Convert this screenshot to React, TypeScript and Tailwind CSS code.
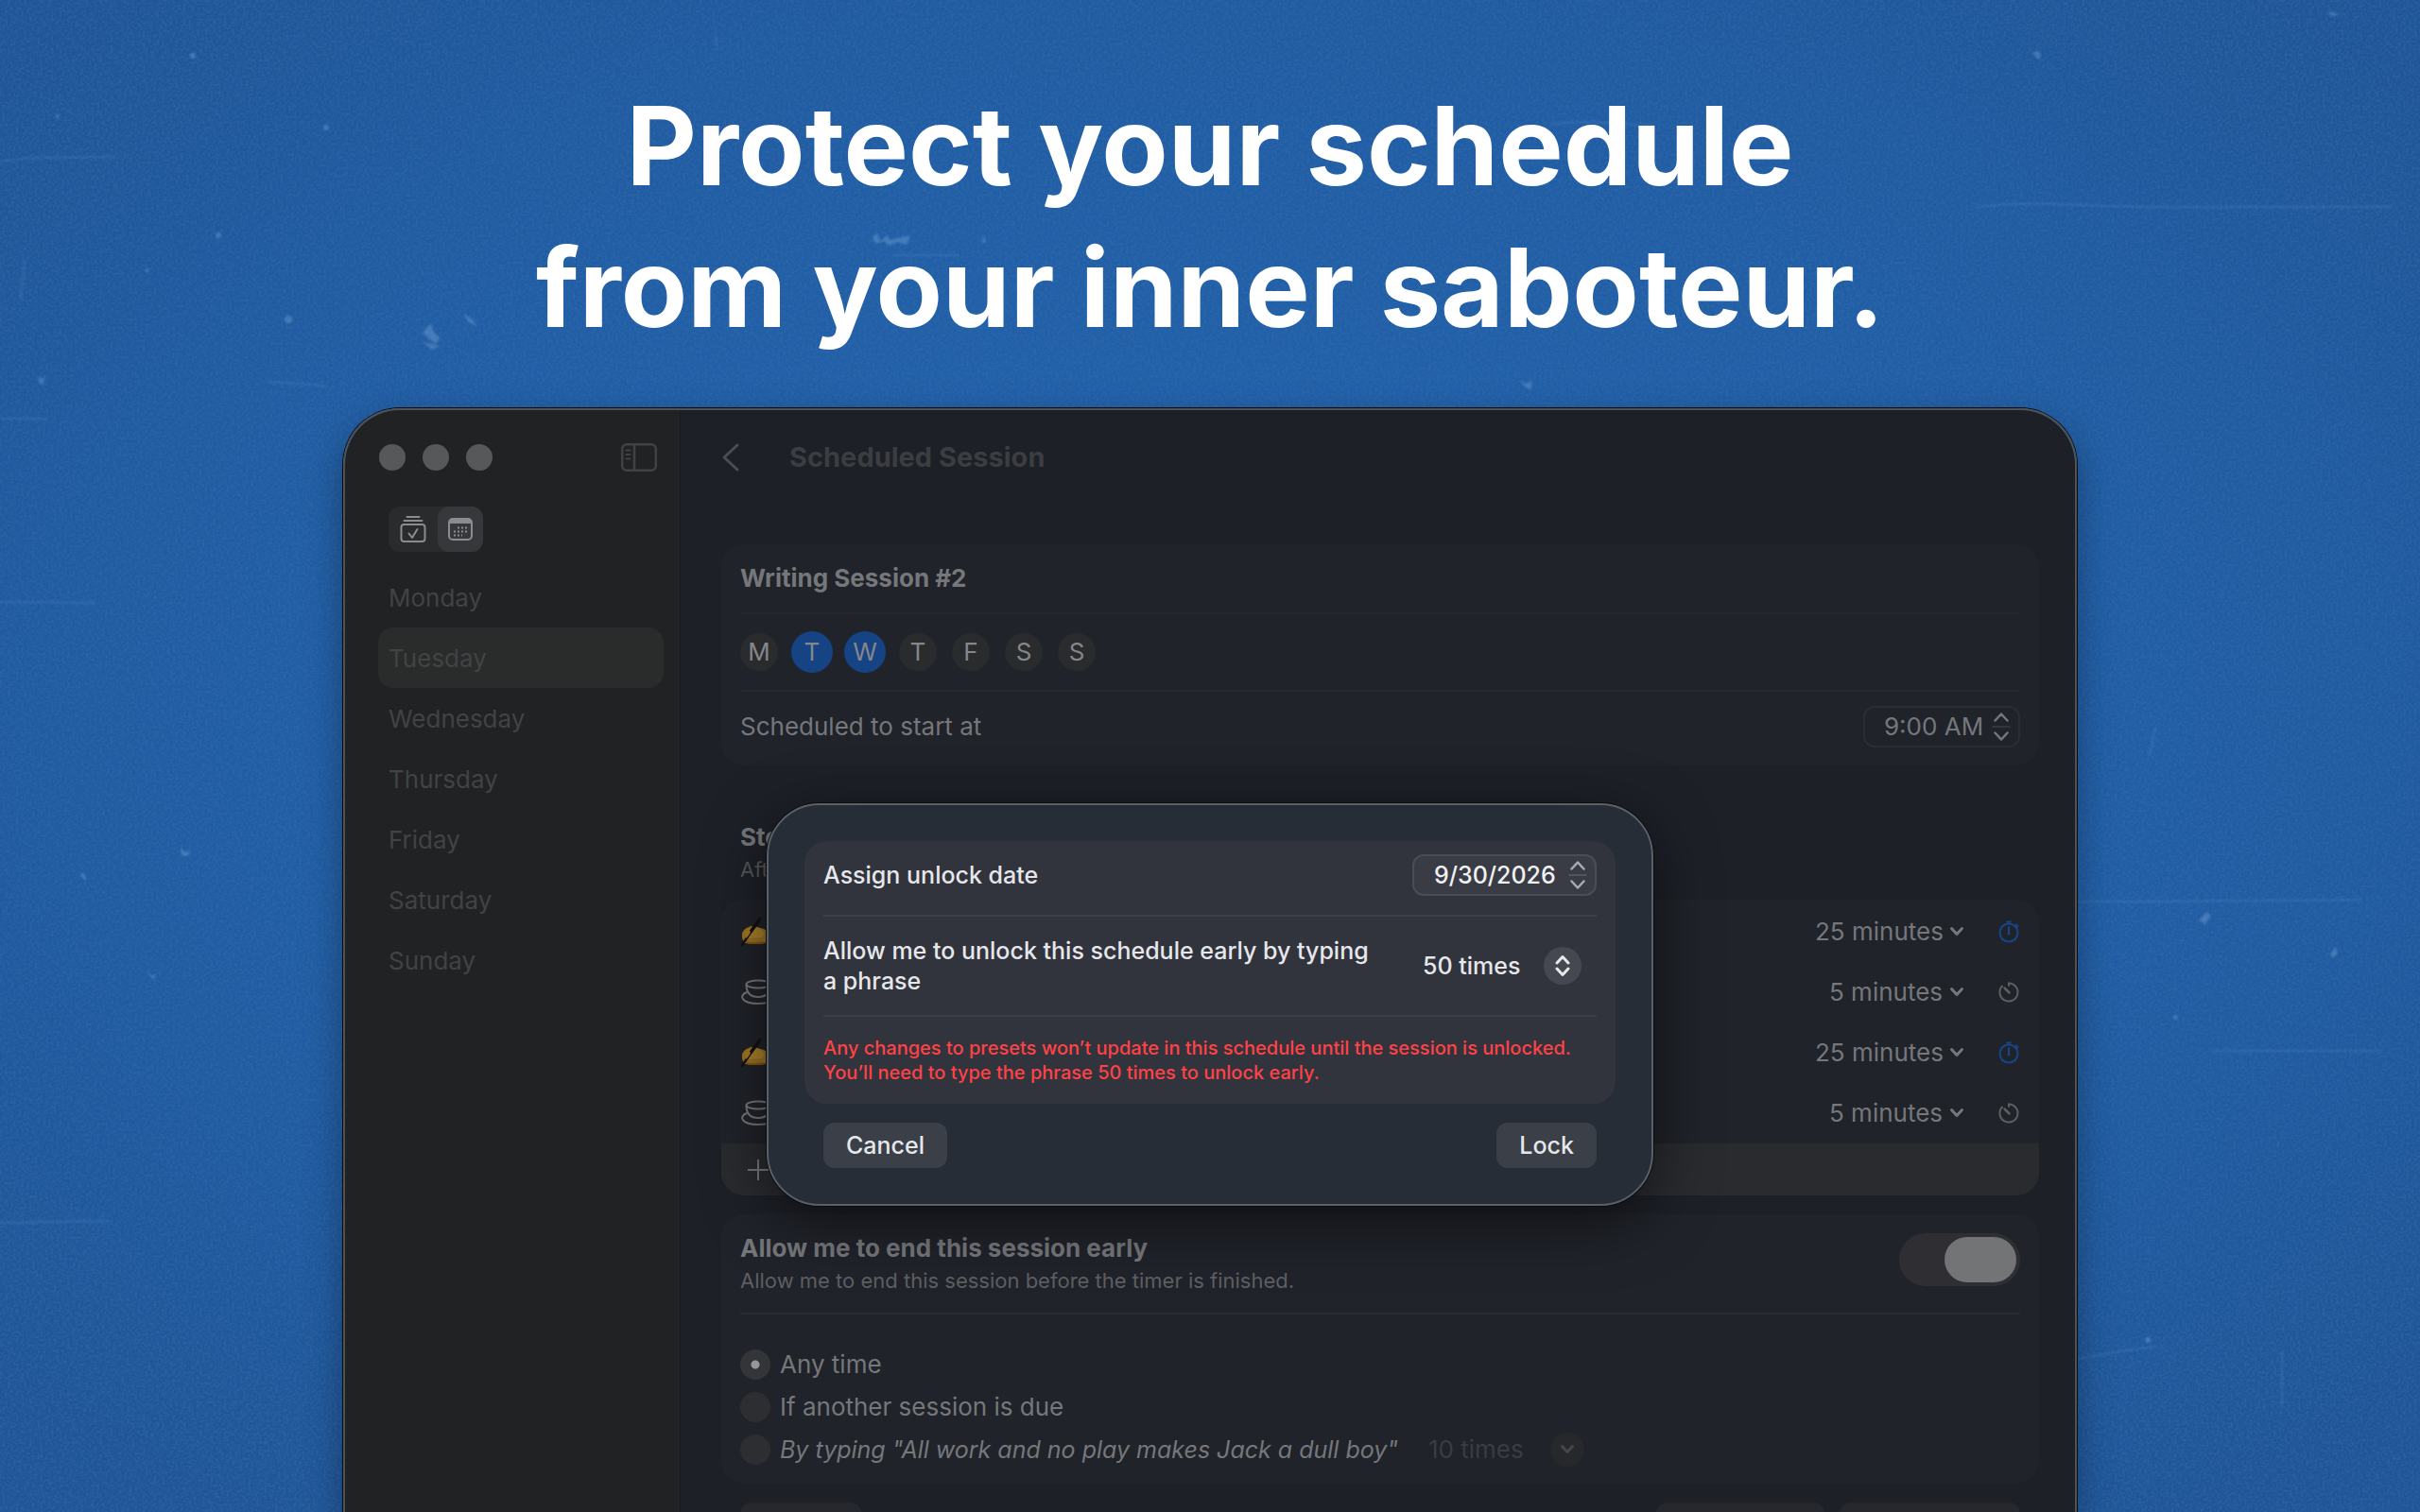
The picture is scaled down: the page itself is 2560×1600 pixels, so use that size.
import React, { useState } from "react";

const days = ["Monday", "Tuesday", "Wednesday", "Thursday", "Friday", "Saturday", "Sunday"];

const steps = [
  { kind: "write", length: "25 minutes" },
  { kind: "break", length: "5 minutes" },
  { kind: "write", length: "25 minutes" },
  { kind: "break", length: "5 minutes" },
];

const endRules = [
  { id: "any", text: "Any time" },
  { id: "due", text: "If another session is due" },
  { id: "typing", text: 'By typing "All work and no play makes Jack a dull boy"' },
];

// scratched paper texture behind everything
const Paper = () => (
  <svg
    className="absolute inset-0 h-full w-full"
    viewBox="0 0 2560 1600"
    preserveAspectRatio="xMidYMid slice"
    aria-hidden="true"
  >
    <defs>
      <radialGradient id="glow" cx="50%" cy="48%" r="65%">
        <stop offset="0%" stopColor="#2163af" />
        <stop offset="60%" stopColor="#205da7" />
        <stop offset="100%" stopColor="#1f5599" />
      </radialGradient>
      <filter id="grain" x="0" y="0" width="100%" height="100%">
        <feTurbulence type="fractalNoise" baseFrequency="0.35" numOctaves="3" seed="4" />
        <feColorMatrix values="0 0 0 0 0.04  0 0 0 0 0.16  0 0 0 0 0.36  2.6 0 0 0 -0.95" />
      </filter>
      <filter id="soft" x="-20%" y="-20%" width="140%" height="140%">
        <feGaussianBlur stdDeviation="1" />
      </filter>
    </defs>
    <rect width="2560" height="1600" fill="url(#glow)" />
    <rect width="2560" height="1600" filter="url(#grain)" opacity="0.45" />
    <g stroke="#6fa3dc" fill="none" strokeWidth="2" opacity="0.2" filter="url(#soft)">
      <path d="M0 171l30-4 90-1M26 275l-4 42M283 404l62 4M0 443h50M0 637l102 1M0 1294l115-2" />
      <path d="M2198 1438l50-9 32-4M2198 954h90l210-2M2414 1430v60M2090 219c70-8 140 2 230 0h210M2340 1112h180" />
      <path d="M1640 131c40-4 70 0 110 2M945 270h70M2280 770l-6 30" />
    </g>
    <g fill="#86b0e0" opacity="0.35" filter="url(#soft)">
      <path d="M447 352l9-10 2 8 7 8-4 6-8-6zM490 332l10 6 4 7-8-4zM40 398l5 3 3-4-2 9-4 1z" />
      <path d="M923 252l5-6 3 9 8-6 2 5 22-5-4 10-10-3-8 4-6-5-8 3zM1040 248l3 8-4 2zM447 362l18 4-8 4z" />
      <path d="M1608 402l6 4 7-3-2 10-6-4zM191 898l6 4 5-2-4 6-6-1zM84 925l8 8-3-9zM2150 56l7 7 2-6-4-3z" />
      <path d="M2326 974l8-9 5 4-6 9zM2298 1078l4-5 2 6zM2465 1010l5-8 3 6-5 6zM155 1028l6 5 5-3-4 7zM756 30l4 26-3-12zM2462 12l14 3-10 2z" />
      <circle cx="61" cy="123" r="2" />
      <circle cx="204" cy="59" r="3" />
      <circle cx="345" cy="135" r="3" />
      <circle cx="231" cy="249" r="3" />
      <circle cx="305" cy="338" r="4" />
      <circle cx="2272" cy="1418" r="3" />
      <circle cx="156" cy="286" r="2" />
    </g>
  </svg>
);

const SidebarIcon = () => (
  <svg className="h-8 w-10" viewBox="0 0 40 32" fill="none" stroke="currentColor" strokeWidth="2.5">
    <rect x="2.2" y="2.2" width="35.6" height="27.6" rx="5" />
    <path d="M15 2v28" />
    <path d="M6.500 8.500h4M6.500 13h4M6.500 17.500h4" strokeWidth="2" strokeLinecap="round" />
  </svg>
);

const PresetsIcon = () => (
  <svg className="h-7 w-7" viewBox="0 0 28 28" fill="none" stroke="currentColor" strokeWidth="2">
    <path d="M7.500 1h13M4.500 5h19" strokeLinecap="round" />
    <rect x="1.500" y="9" width="25" height="18" rx="3" />
    <path d="M9.500 18.500l3.500 4.500 5.500-9" strokeLinecap="round" strokeLinejoin="round" />
  </svg>
);

const CalendarIcon = () => (
  <svg className="h-6 w-[26px]" viewBox="0 0 26 24" fill="none" stroke="currentColor" strokeWidth="2">
    <rect x="1" y="1" width="24" height="22" rx="4" />
    <path d="M2 3.500h22" strokeWidth="5" />
    <path d="M10 10.500h12M6 14.500h16M6 18.500h9" strokeWidth="2" strokeDasharray="2 2" />
  </svg>
);

const Stepper = () => (
  <svg className="h-8 w-5 shrink-0" viewBox="0 0 20 32" fill="none" stroke="currentColor" strokeWidth="2.500" strokeLinecap="round" strokeLinejoin="round">
    <path d="M3.500 9.500L10 2.500l6.500 7M3.500 22.500l6.500 7 6.500-7" />
    <path d="M1 16h18" strokeWidth="1.500" opacity="0.3" />
  </svg>
);

const ChevronDown = () => (
  <svg className="h-4 w-4 shrink-0" viewBox="0 0 16 16" fill="none" stroke="currentColor" strokeWidth="3" strokeLinecap="round" strokeLinejoin="round">
    <path d="M2.500 4.500L8 10.500l5.500-6" />
  </svg>
);

const Hand = () => (
  <svg className="h-8 w-9" viewBox="0 0 36 32">
    <path d="M4 28L2 22v-5l3-4 6-3 7 1 7 2 8 5 3 4v4l-10 2z" fill="#9c7424" />
    <path d="M7 13c6-3 13-2 17 2 2 3 1 6-3 7-5 1-8 0-12 1z" fill="#aa822b" />
    <path d="M6 26c6 2 14 1 22 0l-4 3H8z" fill="#85540f" />
    <path d="M2 30L21 2" stroke="#15110f" strokeWidth="2.500" strokeLinecap="round" />
    <path d="M11 16L20 4" stroke="#15110f" strokeWidth="3.500" strokeLinecap="round" />
    <path d="M4 16c3-2 6-2 7 0-1 3-3 5-5 7z" fill="#a67d28" />
  </svg>
);

const Cup = () => (
  <svg className="h-7 w-10" viewBox="0 0 40 28" fill="none" stroke="#77787b" strokeWidth="2">
    <ellipse cx="19" cy="5.500" rx="12.500" ry="4" />
    <path d="M6.500 6c0 8 4 13 12.500 13S31.500 14 31.500 6" />
    <path d="M31 8c7-2 7 7-1 6" />
    <path d="M7 14c-9 3-6 12 12 12s20-8 12-12" />
  </svg>
);

const FocusTimer = () => (
  <svg className="h-6 w-6" viewBox="0 0 24 24" fill="none" stroke="#16458b" strokeWidth="2">
    <circle cx="12" cy="13" r="9.500" />
    <path d="M12 1v3M9.500 1.500h5M19 4l3 3" />
    <path d="M12 7v6" strokeLinecap="round" />
    <circle cx="12" cy="14" r="1.500" fill="#16458b" stroke="none" />
  </svg>
);

const BreakTimer = () => (
  <svg className="h-6 w-6" viewBox="0 0 24 24" fill="none" stroke="#5c5e60" strokeWidth="2" strokeLinecap="round">
    <path d="M12 5V2.500a9.500 9.500 0 1 1-7 3" />
    <path d="M7.500 7.500l5 5" strokeWidth="2.500" />
  </svg>
);

const Sidebar = () => {
  const [day, setDay] = useState("Tuesday");

  return (
    <aside className="w-[355px] shrink-0 border-r border-[#191b1e] bg-[#202224] pl-[35px] pr-[17px]">
      <div className="flex h-[100px] items-center justify-between pr-1.5">
        <div className="flex gap-[18px] pl-px">
          <span className="h-7 w-7 rounded-full bg-[#56585a]" />
          <span className="h-7 w-7 rounded-full bg-[#56585a]" />
          <span className="h-7 w-7 rounded-full bg-[#56585a]" />
        </div>
        <button aria-label="Toggle sidebar" className="text-[#3f4143]">
          <SidebarIcon />
        </button>
      </div>
      <div className="ml-[11px] mt-0.5 flex w-[100px] rounded-xl bg-[#2a2b2d] text-[#8b8c8e]">
        <button aria-label="Presets" className="flex h-12 w-[52px] items-center justify-center">
          <PresetsIcon />
        </button>
        <button aria-label="Schedule" className="flex h-12 w-12 items-center justify-center rounded-xl bg-[#37383b]">
          <CalendarIcon />
        </button>
      </div>
      <nav className="mt-4">
        {days.map((d) => (
          <button
            key={d}
            onClick={() => setDay(d)}
            className={`flex h-16 w-full items-center rounded-2xl pl-[11px] text-[26px] text-[#414345] ${d === day ? "bg-[#2a2b2b]" : ""}`}
          >
            {d}
          </button>
        ))}
      </nav>
    </aside>
  );
};

const DayPicker = () => {
  const [picked, setPicked] = useState([1, 2]);

  const toggle = (i: number) =>
    setPicked(picked.includes(i) ? picked.filter((p) => p !== i) : [...picked, i]);

  return (
    <div className="-ml-0.5 flex gap-3">
      {days.map((d, i) => (
        <button
          key={d}
          aria-label={d}
          aria-pressed={picked.includes(i)}
          onClick={() => toggle(i)}
          className="flex h-11 w-11 items-center justify-center text-[26px] text-[#85868a]"
        >
          <span
            className={`flex items-center justify-center rounded-full ${picked.includes(i) ? "h-11 w-11 bg-[#154384]" : "h-10 w-10 bg-[#292b2d]"}`}
          >
            {d[0]}
          </span>
        </button>
      ))}
    </div>
  );
};

const Session = () => {
  const [rule, setRule] = useState("any");

  return (
    <main className="min-w-0 flex-1 bg-[#1d2027] pl-[43px] pr-[38px] text-[26px] leading-8 text-[#76777a]">
      <div className="flex h-[100px] items-center gap-[52px] text-[#3b3d40]">
        <button aria-label="Back">
          <svg className="h-8 w-5" viewBox="0 0 20 32" fill="none" stroke="#4b4d50" strokeWidth="3" strokeLinecap="round" strokeLinejoin="round">
            <path d="M17 3L3 16l14 13" />
          </svg>
        </button>
        <h2 className="text-[29px] font-bold">Scheduled Session</h2>
      </div>

      <section className="mt-[42px] rounded-3xl bg-[#20232a] px-5 pb-1">
        <div className="flex h-[74px] items-center border-b-2 border-[#26282c]">
          <h3 className="font-bold">Writing Session #2</h3>
        </div>
        <div className="flex h-[82px] items-center border-b-2 border-[#26282c]">
          <DayPicker />
        </div>
        <div className="flex h-[74px] items-center justify-between">
          <label htmlFor="start">Scheduled to start at</label>
          <div className="flex h-11 w-[166px] items-center justify-between rounded-xl border-2 border-[#2b2d2f] pl-5 pr-2">
            <input id="start" defaultValue="9:00 AM" className="w-[108px] bg-transparent outline-none" />
            <Stepper />
          </div>
        </div>
      </section>

      <div className="mb-[18px] mt-[60px] px-5">
        <h3 className="font-bold">Steps</h3>
        <p className="mt-1 text-[22px] leading-7 text-[#55575a]">After</p>
      </div>
      <section className="overflow-hidden rounded-3xl bg-[#20232a] pt-0.5">
        {steps.map((s, i) => (
          <div key={i} className="flex h-16 items-center px-5">
            <div className="flex-1">{s.kind === "write" ? <Hand /> : <Cup />}</div>
            <label className="mr-[35px] flex items-center gap-1.5">
              <select aria-label="Step length" className="appearance-none bg-transparent outline-none" defaultValue={s.length}>
                <option>{s.length}</option>
              </select>
              <ChevronDown />
            </label>
            <button aria-label="Timer type">{s.kind === "write" ? <FocusTimer /> : <BreakTimer />}</button>
          </div>
        ))}
        <button aria-label="Add step" className="flex h-[55px] w-full items-center bg-[#292b2f] px-7">
          <svg className="h-[22px] w-[22px]" viewBox="0 0 22 22" stroke="currentColor" strokeWidth="2">
            <path d="M11 0v22M0 11h22" />
          </svg>
        </button>
      </section>

      <section className="mt-5 rounded-3xl bg-[#20232a] px-5 pb-3.5 pt-5">
        <div className="flex justify-between border-b-2 border-[#292b2e] pb-5">
          <div>
            <h3 className="font-bold">Allow me to end this session early</h3>
            <p className="mt-1 text-[22px] leading-7 text-[#5d5f62]">
              Allow me to end this session before the timer is finished.
            </p>
          </div>
          <label className="flex h-14 w-32 cursor-pointer justify-start rounded-full bg-[#2f2f33] p-1 has-checked:justify-end">
            <input type="checkbox" role="switch" aria-label="Allow me to end this session early" defaultChecked className="sr-only" />
            <span className="h-12 w-[76px] rounded-full bg-[#737476]" />
          </label>
        </div>
        <div className="pt-[30px]">
          {endRules.map((r) => (
            <div key={r.id} className="flex h-[45px] items-center">
              <label className="flex items-center gap-2.5">
                <input
                  type="radio"
                  name="end-rule"
                  checked={rule === r.id}
                  onChange={() => setRule(r.id)}
                  className="h-8 w-8 appearance-none rounded-full bg-[#2c2e31] checked:bg-[radial-gradient(circle,#96979a_0_4px,#333538_5px)]"
                />
                <span className={r.id === "typing" ? "text-[25px] italic" : ""}>{r.text}</span>
              </label>
              {r.id === "typing" && (
                <label className="ml-8 flex items-center gap-7 text-[#3a3c3f]">
                  <select aria-label="Times to type" className="appearance-none bg-transparent outline-none">
                    <option>10 times</option>
                  </select>
                  <span className="flex h-9 w-9 items-center justify-center rounded-full bg-[#26282b] text-[#45474a]">
                    <ChevronDown />
                  </span>
                </label>
              )}
            </div>
          ))}
        </div>
      </section>

      <div className="mt-5 flex gap-4 px-5">
        <button aria-label="Delete" className="h-12 w-32 rounded-xl bg-[#26282d]" />
        <button aria-label="Duplicate" className="ml-auto h-12 w-[178px] rounded-xl bg-[#26282d]" />
        <button aria-label="Lock schedule" className="h-12 w-[191px] rounded-xl bg-[#26282d]" />
      </div>
    </main>
  );
};

const LockDialog = () => (
  <div
    role="dialog"
    aria-label="Lock schedule"
    className="absolute left-1/2 top-[416px] w-[938px] -translate-x-1/2 rounded-[56px] border-2 border-[#5b5f66] bg-[#272d37] p-[38px] text-[25px] font-medium leading-8 text-[#e6e7ea] shadow-[0_0_0_1px_#0b0c0e,0_16px_64px_rgba(0,0,0,0.55)]"
  >
    <div className="rounded-3xl bg-[#31333d] px-5 pb-5">
      <div className="flex items-center justify-between border-b-2 border-[#3d4049] pb-5 pt-3.5">
        <label htmlFor="unlock">Assign unlock date</label>
        <div className="flex h-11 w-[195px] items-center justify-between rounded-xl border-2 border-[#4a4d56] bg-[#3a3c45] pl-[21px] pr-2 text-[#f0f1f3]">
          <input id="unlock" defaultValue="9/30/2026" className="w-[136px] bg-transparent outline-none" />
          <span className="text-[#a9abb0]">
            <Stepper />
          </span>
        </div>
      </div>
      <div className="flex h-[106px] items-center justify-between border-b-2 border-[#3d4049] pr-4">
        <label htmlFor="times" className="w-[596px]">
          Allow me to unlock this schedule early by typing a phrase
        </label>
        <div className="flex items-center gap-6">
          <select id="times" className="appearance-none bg-transparent outline-none">
            <option>50 times</option>
          </select>
          <span className="flex h-10 w-10 items-center justify-center rounded-full bg-[#464851]">
            <svg className="h-6 w-5" viewBox="0 0 20 24" fill="none" stroke="currentColor" strokeWidth="3" strokeLinecap="round" strokeLinejoin="round">
              <path d="M4 9l6-6.500L16 9M4 15l6 6.500 6-6.500" />
            </svg>
          </span>
        </div>
      </div>
      <p className="pt-5 text-[20px] leading-[26px] text-[#ff4245]">
        Any changes to presets won’t update in this schedule until the session is unlocked.
        <br />
        You’ll need to type the phrase 50 times to unlock early.
      </p>
    </div>
    <div className="mt-5 flex justify-between px-5">
      <button className="h-12 rounded-xl bg-[#3b3f48] px-6">Cancel</button>
      <button className="h-12 rounded-xl bg-[#3b3f48] px-6">Lock</button>
    </div>
  </div>
);

const App = () => {
  return (
    <div className="relative flex h-screen flex-col overflow-hidden bg-[#205ca2] font-['Inter',sans-serif]">
      <Paper />
      <h1 className="relative pt-20 text-center text-[115px] font-bold leading-[150px] text-white">
        Protect your schedule
        <br />
        from your inner saboteur.
      </h1>
      <div className="relative mt-[52px] flex min-h-0 flex-1 px-[363px]">
        <div className="relative flex w-full rounded-t-[60px] border-2 border-b-0 border-[#505355] shadow-[0_0_0_1px_#0a0d12,0_16px_40px_rgba(0,0,0,0.35)]">
          <div className="flex w-full overflow-hidden rounded-t-[58px]">
            <Sidebar />
            <Session />
          </div>
          <LockDialog />
        </div>
      </div>
    </div>
  );
};

export default App;
